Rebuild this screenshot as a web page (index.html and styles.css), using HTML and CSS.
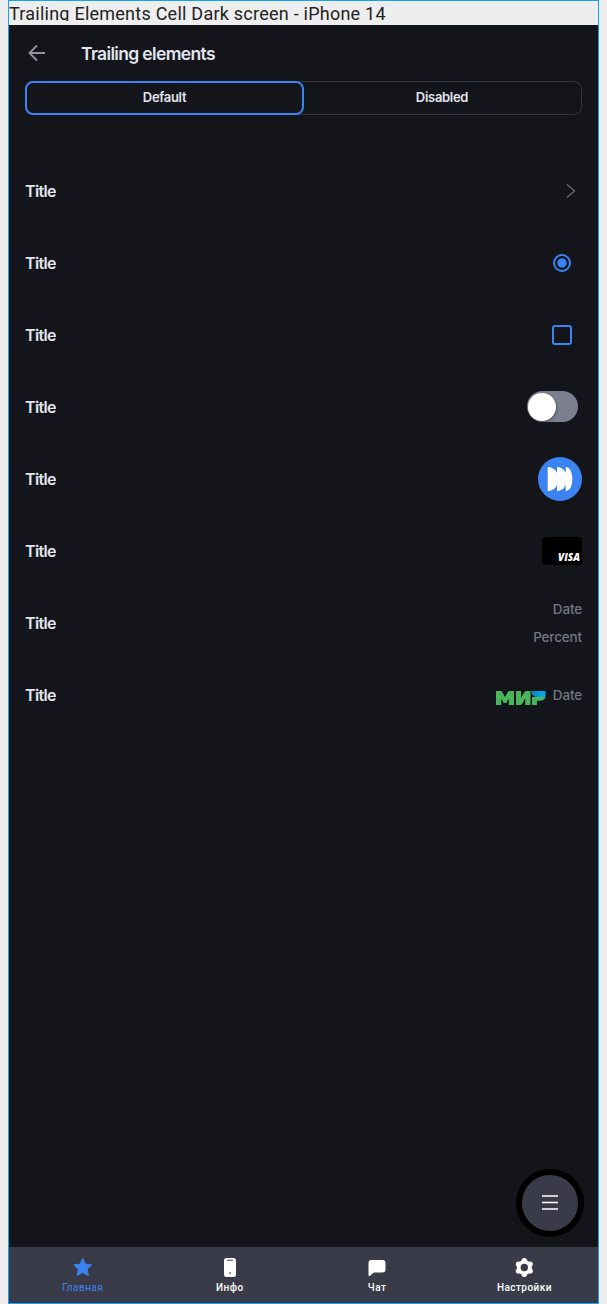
FILE: index.html
```html
<!DOCTYPE html>
<html lang="ru">
<head>
<meta charset="utf-8">
<title>Trailing elements</title>
<link rel="stylesheet" href="styles.css">
</head>
<body>
<div class="frame">
  <div class="caption"><span>Trailing Elements Cell Dark screen - iPhone 14</span></div>
  <main class="screen">
    <header class="header">
      <svg class="back" width="18" height="18" viewBox="0 0 18 18"><path d="M17 9H2M9 1.500L1.500 9L9 16.500"/></svg>
      <h1 class="heading">Trailing elements</h1>
    </header>
    <div class="segments">
      <div class="segment selected">Default</div>
      <div class="segment">Disabled</div>
    </div>
    <div class="list">
      <div class="row"><span class="title">Title</span>
        <svg class="chevron" width="10" height="16" viewBox="0 0 10 16"><path d="M1 1.500L8.500 8L1 14.500"/></svg>
      </div>
      <div class="row"><span class="title">Title</span><span class="radio"></span></div>
      <div class="row"><span class="title">Title</span><span class="checkbox"></span></div>
      <div class="row"><span class="title">Title</span><span class="toggle"></span></div>
      <div class="row"><span class="title">Title</span>
        <svg width="44" height="44" viewBox="0 0 44 44">
          <circle cx="22" cy="22" r="22" fill="#3a83f1"/>
          <path fill="#fff" d="M9.700 10C14 10 17.500 12.500 19 16V10C23 10 26.200 12.500 27.700 16V10C32 10 34.300 15 34.300 22S32 34 27.700 34V28C26.200 31.500 23 34 19 34V28C17.500 31.500 14 34 9.700 34Z"/>
        </svg>
      </div>
      <div class="row"><span class="title">Title</span><span class="card"><span class="visa">VISA</span></span></div>
      <div class="row"><span class="title">Title</span><span class="details"><span>Date</span><span>Percent</span></span></div>
      <div class="row"><span class="title">Title</span>
        <span class="payment">
          <svg class="mir" width="50" height="16" viewBox="0 0 50 16">
            <defs><linearGradient id="sky"><stop stop-color="#087bbd"/><stop offset=".65" stop-color="#05a3df"/></linearGradient></defs>
            <path fill="#4ab55b" d="M0 1H5.500L9 7L12.500 1H18V15H12.800V8.500L10.300 13H7.700L5.200 8.500V15H0ZM20 1H25V8L28.500 2Q29.200 1 31 1H34.500V15H29.300V8L26 14Q25.300 15 23.500 15H20ZM36 7H49.500C49 9.500 46.500 10.800 44 10.800H41V15H36Z"/>
            <path fill="url(#sky)" d="M35 1H49.500V7H41C37.500 7 35.500 4.500 35 1Z"/>
          </svg>
          <span>Date</span>
        </span>
      </div>
    </div>
    <button class="fab" aria-label="Menu"><svg width="16" height="16" viewBox="0 0 16 16"><path d="M0 1H16M0 7.500H16M0 14H16"/></svg></button>
    <nav class="nav">
      <div class="tab active">
        <svg width="20" height="20" viewBox="0 0 20 20"><path fill="currentColor" stroke="currentColor" stroke-linejoin="round" d="M9.700 1.500L12.400 7.200L18.500 7.900L14 12.300L15.300 18.500L9.700 15.400L4.100 18.500L5.400 12.300L.9 7.900L7 7.200Z"/></svg>
        <span>Главная</span>
      </div>
      <div class="tab">
        <svg width="20" height="20" viewBox="0 0 20 20"><rect x="4" y="1" width="12" height="19" rx="2.500" fill="currentColor"/><path d="M7.500 3.200H12.500" stroke="#3a3b49" stroke-linecap="round"/><circle cx="10" cy="16" r="1" fill="#73747e"/></svg>
        <span>Инфо</span>
      </div>
      <div class="tab">
        <svg width="20" height="20" viewBox="0 0 20 20"><path fill="currentColor" d="M4.500 3H15.500Q18.500 3 18.500 6V12.500Q18.500 15.500 15.500 15.500H7L3 18.800Q1.500 19.500 1.500 18V6Q1.500 3 4.500 3Z"/></svg>
        <span>Чат</span>
      </div>
      <div class="tab">
        <svg width="20" height="20" viewBox="0 0 20 20"><g transform="translate(.3 .5)"><g fill="currentColor"><circle cx="10" cy="10" r="7.500"/><circle cx="10" cy="3.300" r="2.700"/><circle cx="15.800" cy="6.600" r="2.700"/><circle cx="15.800" cy="13.400" r="2.700"/><circle cx="10" cy="16.700" r="2.700"/><circle cx="4.200" cy="13.400" r="2.700"/><circle cx="4.200" cy="6.600" r="2.700"/></g><circle cx="10" cy="10" r="3.700" fill="#3a3b49"/></g></svg>
        <span>Настройки</span>
      </div>
    </nav>
  </main>
</div>
</body>
</html>
```
FILE: styles.css
```css
* { box-sizing: border-box; }
body { margin: 0; background: #eee; font-family: Inter, sans-serif; }
.frame { width: 591px; height: 1304px; margin-left: 8px; border: 1px solid #0ea5f5; display: flex; flex-direction: column; }
.caption { height: 24px; flex: none; }
.caption span { display: block; height: 20px; overflow: hidden; font: 18px/26px Roboto, sans-serif; letter-spacing: 0.24px; color: #222; white-space: nowrap; }
.screen { position: relative; flex: 1; min-height: 0; display: flex; flex-direction: column; background: #14151a; color: #e2e5f0; }
.header { height: 56px; flex: none; display: flex; align-items: center; gap: 35px; padding-left: 19px; }
.back { fill: none; stroke: #9294a1; stroke-width: 1.8; }
.heading { margin: 2px 0 0; font-size: 17.5px; line-height: 24px; font-weight: 600; letter-spacing: -0.65px; }
.segments { height: 34px; flex: none; margin: 0 16px; display: flex; border: 1px solid #343542; border-radius: 8px; }
.segment { flex: 1 1 0; display: flex; align-items: center; justify-content: center; padding-bottom: 2px; font-size: 13px; font-weight: 600; letter-spacing: -0.3px; }
.selected { flex: 0 0 279px; margin: -1px; padding-bottom: 2px; border: 2px solid #3a83f1; border-radius: 8px; }
.list { flex: 1; padding: 40px 16px 0; }
.row { height: 72px; display: flex; align-items: center; justify-content: space-between; }
.title { font-size: 16px; line-height: 24px; font-weight: 600; letter-spacing: -0.65px; }
.chevron { margin-right: 6px; fill: none; stroke: #686a78; stroke-width: 1.3; }
.radio { width: 18px; height: 18px; margin-right: 11px; border: 2px solid #3a83f1; border-radius: 50%; background: radial-gradient(circle, #3a83f1 4.3px, transparent 5px); }
.checkbox { width: 20px; height: 20px; margin-right: 10px; border: 2px solid #3a83f1; border-radius: 3px; }
.toggle { width: 51px; height: 31px; margin-right: 4px; margin-bottom: 1px; padding: 2px 1px; border-radius: 16px; background: #7b7f90; }
.toggle::before { content: ""; display: block; width: 28px; height: 28px; border-radius: 50%; background: #fff; box-shadow: 1px 1px 2px #0005; }
.card { width: 40px; height: 28px; border-radius: 4px; background: #000; display: flex; align-items: flex-end; justify-content: flex-end; padding: 0 2px 2px; }
.visa { font: italic 800 10px/12px "Open Sans", sans-serif; letter-spacing: 0; color: #fff; }
.details, .payment { font-size: 13.5px; line-height: 20px; letter-spacing: -0.15px; color: #737685; font-weight: 500; }
.details { display: flex; flex-direction: column; align-items: flex-end; gap: 8px; }
.payment { display: flex; align-items: center; gap: 7px; }
.mir { margin-top: 6px; }
.fab { position: absolute; right: 14px; bottom: 66px; width: 68px; height: 68px; padding: 0; border: 6px solid #000; border-radius: 50%; background: #3a3b49; display: flex; align-items: center; justify-content: center; }
.fab svg { fill: none; stroke: #fff; stroke-width: 1.7; }
.nav { height: 56px; flex: none; display: flex; background: #3a3b49; color: #fff; }
.tab { flex: 1; display: flex; flex-direction: column; align-items: center; padding-top: 10px; font: 500 10px/12px Roboto, sans-serif; letter-spacing: 0.45px; gap: 5px; }
.active { color: #3a83f1; }
.active span { font-weight: 400; }
```
